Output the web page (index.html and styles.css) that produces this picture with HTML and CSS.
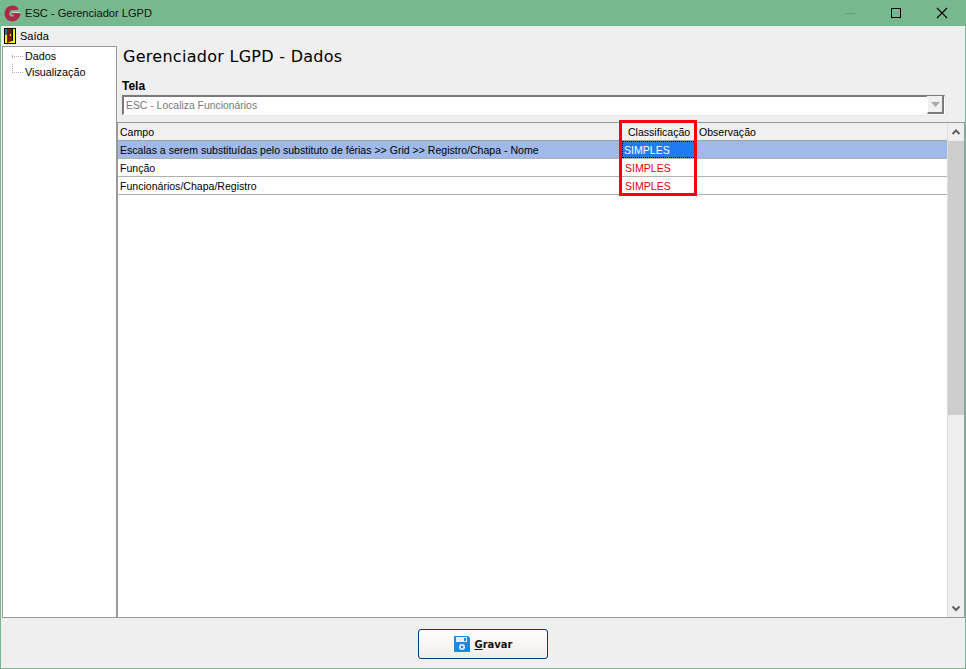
FILE: index.html
```html
<!DOCTYPE html>
<html lang="pt">
<head>
<meta charset="utf-8">
<title>ESC - Gerenciador LGPD</title>
<link rel="stylesheet" href="styles.css">
</head>
<body>
<div class="window">
  <header class="titlebar">
    <svg class="app-icon" width="17" height="17" viewBox="0 0 17 17"><path d="M8.500.500C11 .500 13.300 1.600 14.800 3.400L12.800 5H8.200C6.600 5 5.600 6.200 5.300 8.100 5 10.100 5.800 11.500 7.400 11.500H9.700L10.200 9.800H7.600L8.300 7.600H16.500C16.500 12.500 13 16.500 8.500 16.500 4 16.500.500 12.900.500 8.500S4 .500 8.500.500Z" fill="#a92b47"/><path d="M8.300 7.600H16.500" stroke="#dfe9e2" stroke-width="1"/></svg>
    <span class="title">ESC - Gerenciador LGPD</span>
    <div class="winbtns">
      <svg class="winbtn" width="46" height="26" viewBox="0 0 46 26"><path d="M18 13.500h10" stroke="#5f9c7b" fill="none"/></svg>
      <svg class="winbtn" width="46" height="26" viewBox="0 0 46 26"><rect x="18.500" y="8.500" width="9" height="9" fill="none" stroke="#000"/></svg>
      <svg class="winbtn" width="46" height="26" viewBox="0 0 46 26"><path d="M18 8l10 10M28 8l-10 10" fill="none" stroke="#000" stroke-width="1.100"/></svg>
    </div>
  </header>
  <nav class="menubar">
    <svg width="12" height="16" viewBox="0 0 12 16"><rect width="12" height="16" fill="#000"/><rect x="1" y="1" width="10" height="14" fill="#ffff00"/><path d="M1 1h2v6H1z" fill="#1a7f9c"/><path d="M1 7h2v8H1z" fill="#ffff00"/><path d="M3 1h5v12l-5 2z" fill="#7d1b1b"/><path d="M8 1h1v12H8z" fill="#000"/><rect x="6" y="6" width="1" height="2" fill="#ffff00"/></svg>
    <span class="menu-item">Saída</span>
  </nav>
  <div class="body">
    <aside class="tree">
      <div class="tree-row"><span class="tree-dots first"></span><span>Dados</span></div>
      <div class="tree-row"><span class="tree-dots last"></span><span>Visualização</span></div>
    </aside>
    <main class="content">
      <h1 class="heading">Gerenciador LGPD - Dados</h1>
      <label class="field-label">Tela</label>
      <div class="combo">
        <span class="combo-text">ESC - Localiza Funcionários</span>
        <span class="combo-btn"><svg width="9" height="5" viewBox="0 0 9 5"><path d="M0 0h9L4.500 5z" fill="#a8a8a8"/></svg></span>
      </div>
      <section class="grid">
        <div class="table">
          <div class="row head">
            <div class="cell c1">Campo</div>
            <div class="cell c2">Classificação</div>
            <div class="cell c3">Observação</div>
          </div>
          <div class="row selected">
            <div class="cell c1">Escalas a serem substituídas pelo substituto de férias &gt;&gt; Grid &gt;&gt; Registro/Chapa - Nome</div>
            <div class="cell c2 simple active">SIMPLES</div>
            <div class="cell c3"></div>
          </div>
          <div class="row">
            <div class="cell c1">Função</div>
            <div class="cell c2 simple">SIMPLES</div>
            <div class="cell c3"></div>
          </div>
          <div class="row">
            <div class="cell c1">Funcionários/Chapa/Registro</div>
            <div class="cell c2 simple">SIMPLES</div>
            <div class="cell c3"></div>
          </div>
        </div>
        <div class="scrollbar">
          <svg class="arrow" width="16" height="18" viewBox="0 0 16 18"><path d="M4.500 11L8 7.500 11.500 11" fill="none" stroke="#606060" stroke-width="2"/></svg>
          <div class="thumb"></div>
          <div class="track"></div>
          <svg class="arrow" width="16" height="17" viewBox="0 0 16 17"><path d="M4.500 6.500L8 10 11.500 6.500" fill="none" stroke="#606060" stroke-width="2"/></svg>
        </div>
        <div class="highlight"></div>
      </section>
    </main>
  </div>
  <footer class="footer">
    <button class="save" type="button">
      <svg width="16" height="16" viewBox="0 0 16 16"><path d="M0 0h14l2 2v14H0z" fill="#1e88e5"/><rect x="2" y="1" width="11" height="5" fill="#e3eef8"/><rect x="10" y="2" width="2" height="3" fill="#1e88e5"/><circle cx="8" cy="11" r="3" fill="#e3eef8"/><circle cx="8" cy="11" r="1.300" fill="#1e88e5"/></svg>
      <span class="save-label"><u>G</u>ravar</span>
    </button>
  </footer>
</div>
</body>
</html>
```
FILE: styles.css
```css
* { box-sizing: border-box; }
html, body { margin: 0; padding: 0; }
body { width: 966px; height: 669px; overflow: hidden; font-family: "Liberation Sans", Arial, sans-serif; font-size: 10.500px; color: #000; background: #efefef; }
.window { width: 966px; height: 669px; display: flex; flex-direction: column; border: 1px solid #76b98f; border-top: 0; background: #efefef; }
.titlebar { height: 26px; margin: 0 -1px; background: #76b98f; display: flex; align-items: center; padding-left: 4px; flex: none; }
.app-icon { flex: none; }
.title { margin-left: 4px; font-size: 11.100px; color: #111; }
.winbtns { margin-left: auto; display: flex; margin-right: 1px; }
.winbtn { display: block; }
.menubar { height: 20px; flex: none; display: flex; align-items: center; padding-left: 3px; gap: 4px; }
.menu-item { font-size: 11px; }
.body { flex: 1; display: flex; min-height: 0; }
.tree { width: 115px; margin-left: 1px; flex: none; background: #fff; border: 1px solid #999; padding-top: 1px; }
.tree-row { height: 16px; display: flex; align-items: center; padding-left: 9px; gap: 2px; font-size: 10.800px; }
.tree-dots { width: 11px; flex: none; align-self: flex-start; border-left: 1px dotted #b0b0b0; border-bottom: 1px dotted #b0b0b0; }
.tree-dots.first { height: 2px; margin-top: 7px; }
.tree-dots.last { height: 9px; }
.content { flex: 1; min-width: 0; display: flex; flex-direction: column; }
.heading { margin: 2px 0 0 6px; height: 18px; font-family: "DejaVu Sans", sans-serif; font-size: 16px; font-weight: 400; line-height: 17px; letter-spacing: .28px; white-space: nowrap; }
.field-label { margin: 13px 0 0 5px; height: 14px; font-weight: 700; font-size: 12px; line-height: 14px; }
.combo { flex: none; width: 823px; height: 20px; margin: 2px 0 0 5px; background: #fff; border: 1px solid #fff; border-top: 2px solid #7a7a7a; border-left: 2px solid #7a7a7a; display: flex; align-items: center; outline: 1px solid #e8e8e8; }
.combo-text { flex: 1; padding-left: 2px; color: #777; font-size: 10.400px; }
.combo-btn { width: 17px; height: 18px; margin-top: -1px; background: #f0f0f0; border-left: 1px solid #fff; border-bottom: 2px solid #7a7a7a; border-right: 2px solid #7a7a7a; display: flex; align-items: center; justify-content: center; }
.grid { position: relative; flex: 1; display: flex; min-height: 0; margin-top: 7px; border: 1px solid #999; background: #fff; }
.table { flex: 1; min-width: 0; }
.row { display: flex; height: 18px; border-bottom: 1px solid #b0b0b0; }
.row.head { background: #f0f0f0; border-bottom: 1px solid #a0a0a0; }
.row.selected { background: #9fb9e9; }
.cell { padding-left: 2px; line-height: 18px; font-size: 10.550px; white-space: nowrap; overflow: hidden; }
.c1 { width: 504px; flex: none; }
.c2 { width: 74px; flex: none; }
.c3 { flex: 1; }
.head .c2 { padding-left: 6px; }
.head .c3 { padding-left: 3px; }
.simple { color: #e60000; padding-left: 3px; background: #fff; }
.simple.active { color: #fff; background: #1e7cf0; outline: 1px dotted #000; outline-offset: -1px; padding-left: 2px; }
.scrollbar { width: 17px; flex: none; background: #efefef; display: flex; flex-direction: column; border-left: 1px solid #dcdcdc; }
.arrow { flex: none; display: block; }
.thumb { height: 274px; background: #cdcdcd; flex: none; }
.track { flex: 1; }
.highlight { position: absolute; left: 501px; top: -3px; width: 78px; height: 76px; border: 3px solid #f00; pointer-events: none; }
.footer { height: 50px; flex: none; display: flex; align-items: center; justify-content: center; padding-top: 2px; }
.save { width: 130px; height: 30px; display: flex; align-items: center; justify-content: center; gap: 4px; padding: 0 0 0 1px; border: 1px solid #003c74; border-radius: 3px; background: linear-gradient(#fff, #f0ede8); color: #111; }
.save-label { font-family: "DejaVu Sans", sans-serif; font-weight: 700; font-size: 10px; }
```
